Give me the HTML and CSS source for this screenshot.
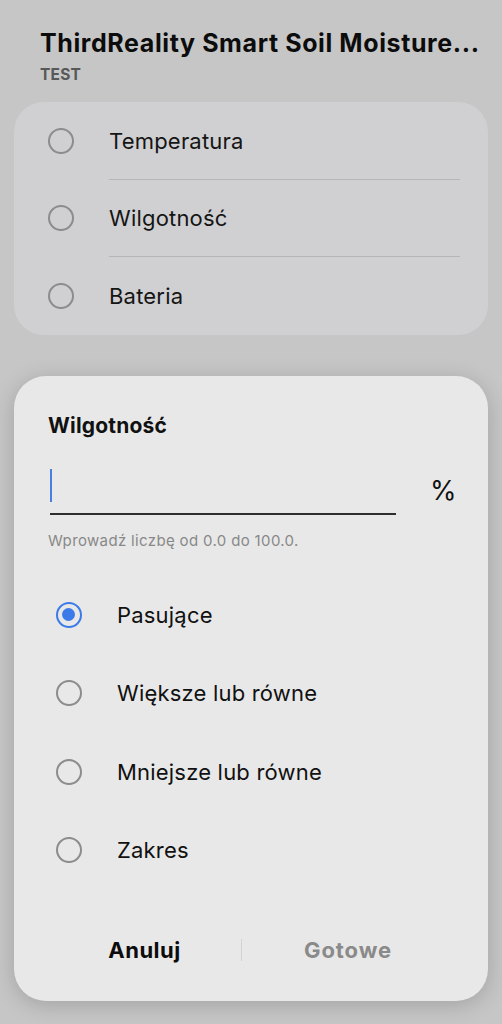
FILE: index.html
```html
<!DOCTYPE html>
<html>
<head>
<meta charset="utf-8">
<link rel="stylesheet" href="styles.css">
</head>
<body>
<div class="screen">
  <header class="head">
    <div class="title">ThirdReality Smart Soil Moisture...</div>
    <div class="sub">TEST</div>
  </header>
  <div class="card">
    <div class="row"><span class="radio"></span><span class="label">Temperatura</span></div>
    <div class="row"><span class="radio"></span><span class="label">Wilgotność</span></div>
    <div class="row last"><span class="radio"></span><span class="label">Bateria</span></div>
  </div>
  <div class="dialog">
    <div class="dtitle">Wilgotność</div>
    <div class="inputrow">
      <div class="field"><span class="cursor"></span></div>
      <div class="unit">%</div>
    </div>
    <div class="help">Wprowadź liczbę od 0.0 do 100.0.</div>
    <div class="options">
      <div class="opt"><span class="radio on"></span><span class="olabel">Pasujące</span></div>
      <div class="opt"><span class="radio"></span><span class="olabel">Większe lub równe</span></div>
      <div class="opt"><span class="radio"></span><span class="olabel">Mniejsze lub równe</span></div>
      <div class="opt"><span class="radio"></span><span class="olabel">Zakres</span></div>
    </div>
    <div class="buttons">
      <div class="btn cancel">Anuluj</div>
      <div class="sep"></div>
      <div class="btn done">Gotowe</div>
    </div>
  </div>
</div>
</body>
</html>
```
FILE: styles.css
```css
* { box-sizing: border-box; }
html, body { margin: 0; padding: 0; }
body {
  background: #c6c6c6;
  font-family: Inter, "Noto Sans", sans-serif;
  color: #111;
  width: 502px;
  height: 1024px;
  overflow: hidden;
}
.screen { padding: 0 14px; }
.head { padding: 28px 0 0 26px; }
.title {
  font-size: 25px;
  font-weight: 700;
  color: #0c0c0c;
  line-height: 30px;
  white-space: nowrap;
  letter-spacing: 0.6px;
}
.sub {
  font-size: 15.5px;
  font-weight: 700;
  color: #585858;
  line-height: 18px;
  margin-top: 8px;
  letter-spacing: 0.2px;
}
.card {
  margin-top: 18px;
  background: #d0d0d2;
  border-radius: 30px;
  padding: 0 28px 0 34px;
  height: 233px;
}
.row {
  display: flex;
  align-items: center;
  height: 77.5px;
  position: relative;
}
.row::after {
  content: "";
  position: absolute;
  left: 61px;
  right: 0;
  bottom: 0;
  height: 1px;
  background: #b6b6b8;
}
.row.last::after { display: none; }
.radio {
  width: 26px;
  height: 26px;
  border-radius: 50%;
  border: 2px solid #8c8c8c;
  flex: none;
}
.label {
  margin-left: 35px;
  font-size: 22px;
  color: #151515;
  letter-spacing: 0.2px;
}
.dialog {
  margin-top: 41px;
  background: #e8e8e8;
  border-radius: 32px;
  height: 625px;
  padding: 36px 34px 0 34px;
  box-shadow: 0 4px 22px rgba(0,0,0,0.18);
}
.dtitle {
  font-size: 21px;
  font-weight: 700;
  color: #111;
  line-height: 28px;
  letter-spacing: 0.2px;
}
.inputrow {
  display: flex;
  align-items: center;
  margin-top: 31px;
}
.field {
  flex: none;
  width: 346px;
  margin-left: 2px;
  height: 44px;
  border-bottom: 2px solid #2e2e2e;
  display: flex;
  align-items: flex-start;
}
.cursor {
  width: 2px;
  height: 33px;
  background: #4a7fe0;
  margin-top: -2px;
}
.unit {
  margin-left: 34px;
  font-size: 27px;
  color: #111;
  margin-top: -6px;
}
.help {
  margin-top: 16px;
  font-size: 15px;
  color: #888;
  line-height: 20px;
  letter-spacing: 0.35px;
}
.options {
  margin-top: 25px;
  padding-left: 8px;
}
.opt {
  display: flex;
  align-items: center;
  height: 78.3px;
}
.olabel {
  margin-left: 35px;
  font-size: 22px;
  color: #111;
  letter-spacing: 0.2px;
}
.radio.on {
  border: 2.5px solid #3b7be9;
  position: relative;
}
.radio.on::after {
  content: "";
  position: absolute;
  left: 4px;
  top: 4px;
  width: 13px;
  height: 13px;
  border-radius: 50%;
  background: #3b7be9;
}
.buttons {
  display: grid;
  grid-template-columns: 193px 1px 1fr;
  align-items: center;
  margin-top: 46px;
  height: 30px;
}
.btn {
  text-align: center;
  font-size: 22px;
  font-weight: 700;
  letter-spacing: 0.5px;
}
.cancel { color: #0c0c0c; }
.done { color: #8a8a8a; letter-spacing: 0.9px; }
.sep {
  width: 1px;
  height: 22px;
  background: #d3d3d3;
}
```
